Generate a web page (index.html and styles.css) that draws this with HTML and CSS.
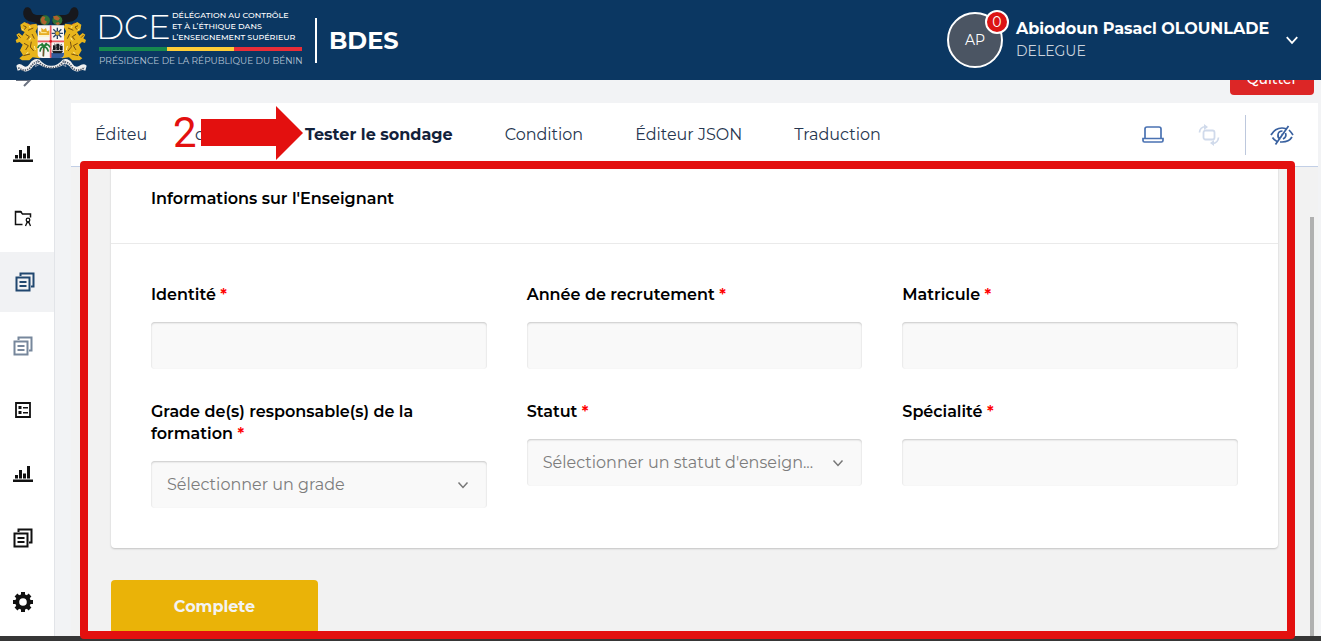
FILE: index.html
```html
<!DOCTYPE html>
<html lang="fr">

<head>
    <meta charset="UTF-8">
    <meta name="viewport" content="width=device-width, initial-scale=1.0">
    <title>BDES</title>
    <link rel="stylesheet" href="styles.css">
</head>

<body>
    <!-- icons used more than once -->
    <svg class="sprite" width="0" height="0">
        <symbol id="i-chart" viewBox="0 0 20 18">
            <path d="M0 14.500h20V17H0zM2 10h3v3.500H2zM6 5h3v8.500H6zM10 8.500h3v5h-3zM14 1h3v12.500h-3z" fill="currentColor" />
        </symbol>
        <symbol id="i-copy" viewBox="0 0 20 20">
            <path d="M5.500 4V1.500h13v13h-2.500M1.500 5.500h13v13h-13zM4.500 10h7M4.500 14h7" fill="none" stroke="currentColor" stroke-width="2" />
        </symbol>
        <symbol id="i-down" viewBox="0 0 12 12">
            <path d="M1.500 3.500L6 8.500l4.500-5" fill="none" stroke="currentColor" stroke-width="1.500" />
        </symbol>
    </svg>

    <header class="header">
        <div class="brand">
            <svg class="crest" viewBox="42 18 222 202">
                <!-- horns -->
                <path d="M76 22c-14 14-4 41 19 42 13 2 19 9 27 11l26-4-2-20c-12-12-29-3-43-9-10-4-6-16-18-21-5-1-8 0-9 1z" fill="#17181d" />
                <path d="M229 22c14 14 4 41-19 42-13 2-19 9-27 11l-26-4 2-20c12-12 29-3 43-9 10-4 6-16 18-21 5-1 8 0 9 1z" fill="#17181d" />
                <ellipse cx="135" cy="60" rx="15" ry="15" fill="#2f7138" />
                <ellipse cx="172" cy="60" rx="15" ry="15" fill="#2f7138" />
                <path d="M122 57l6-9 8 2-3 9 8 5-6 9-10-4zM159 48l12-2 9 8-6 7-11-4zM166 68l10-3 4 6-8 4z" fill="#b0612d" />
                <path d="M81 66l10 8 10-3v7H84zM224 66l-10 8-10-3v7h17z" fill="#c7222c" />
                <!-- leopards -->
                <path d="M61 73l12-8 17 8 19-3 5 9-7 14 7 17v43l9 13-4 8-21-3-10 9H66l-8-6 11-9-9-15 8-17-9-8-9 3-3-9 8-5-6-11 8-5 10 8 7-11-10-5z" fill="#e8b51c" />
                <path d="M244 73l-12-8-17 8-19-3-5 9 7 14-7 17v43l-9 13 4 8 21-3 10 9h22l8-6-11-9 9-15-8-17 9-8 9 3 3-9-8-5 6-11-8-5-10 8-7-11 10-5z" fill="#e8b51c" />
                <path d="M70 76l9 4-6 8M84 90l16-7M77 102l11 7-7 9M96 101l7 14M72 129l13 7-8 13M94 124l-3 16 10 12M70 166l20-5M54 104l8 8M234 76l-9 4 6 8M220 90l-16-7M228 102l-11 7 7 9M209 101l-7 14M233 129l-13 7 8 13M211 124l3 16-10 12M234 166l-20-5M251 104l-8 8" fill="none" stroke="#77500f" stroke-width="3" />
                <path d="M66 85l5 5M87 79l5 2M93 112l-5 8M103 137l3 12M79 160l6-4M239 85l-5 5M217 79l-5 2M212 112l5 8M202 137l-3 12M226 160l-6-4" stroke="#fff0a2" stroke-width="3" />
                <!-- shield -->
                <path d="M113 75h79v86q0 12-13 12h-53q-13 0-13-12z" fill="#f8f5f2" />
                <path d="M152 157h40v4q0 12-13 12h-27z" fill="#315c9c" />
                <path d="M113 123h79M152 75v97" stroke="#ea5961" stroke-width="5" />
                <circle cx="152" cy="123" r="4" fill="#d50f1b" />
                <path d="M117 104V91l7 5V82l7 6 7-5 3 10 7-3v14z" fill="#e7ad27" />
                <path d="M117 107h30M122 97h18" stroke="#fff0a5" stroke-width="3" />
                <path d="M172 82v34M155 99h34M160 87l24 24M184 87l-24 24" stroke="#28466a" stroke-width="4" />
                <circle cx="172" cy="99" r="7" fill="#e3b230" stroke="#28466a" stroke-width="2" />
                <path d="M132 137l-2 31M132 139q-12-12-19 4M132 139q-10 0-12 15M132 139q11-13 18 2M132 139q10 2 13 15M132 138l-7-9M132 138l8-10" fill="none" stroke="#237c37" stroke-width="5" />
                <path d="M130 145v23" stroke="#8a442b" stroke-width="3" />
                <path d="M156 151h34l-6 8h-24zM159 135h8v14h-8zM169 130h9v19h-9zM180 136h8v13h-8z" fill="#191c22" />
                <path d="M162 130l24 20M157 149l29-17" stroke="#191c22" stroke-width="2" />
                <!-- scroll -->
                <path d="M49 196q8-10 22 1 9 7 18-7 13-19 30-12 16 19 35 18 18 1 34-18 17-7 29 12 9 14 20 7 13-10 23-1l-4 15q-10-5-20 2-13 2-24-11-9-13-19-11-19 13-39 13t-38-13q-11-2-20 11-10 13-24 11-9-7-19-2z" fill="#f0f0f0" />
                <path d="M55 202q18 14 34 2 13-21 27-20 19 20 38 18 21 2 36-18 17 0 28 20 16 12 36-2" fill="none" stroke="#4b5565" stroke-width="5" stroke-dasharray="4 3" />
                <path d="M113 179l-7 20 12-7M191 179l7 20-12-7" fill="none" stroke="#8593a8" stroke-width="3" />
            </svg>
            <div class="dce">
                <div class="dce-top">
                    <span class="dce-name">DCE</span>
                    <span class="dce-text">DÉLÉGATION AU CONTRÔLE<br>ET À L’ÉTHIQUE DANS<br>L’ENSEIGNEMENT SUPÉRIEUR</span>
                </div>
                <div class="flag"><i class="green"></i><i class="yellow"></i><i class="red"></i></div>
                <div class="dce-sub">PRÉSIDENCE DE LA RÉPUBLIQUE DU BÉNIN</div>
            </div>
            <div class="brand-name">BDES</div>
        </div>
        <div class="user">
            <div class="avatar">AP<span class="badge">0</span></div>
            <div class="user-info">
                <div class="user-name">Abiodoun Pasacl OLOUNLADE</div>
                <div class="user-role">DELEGUE</div>
            </div>
            <svg class="user-arrow"><use href="#i-down" /></svg>
        </div>
    </header>

    <div class="layout">
        <aside class="sidebar">
            <div class="sidebar-toggle">
                <svg width="16" height="14" viewBox="0 0 16 14"><path d="M0 7h14M8 1l6 6-6 6" fill="none" stroke="#6b7280" stroke-width="2" /></svg>
            </div>
            <a class="side-item" href="#" aria-label="Statistiques"><svg width="20" height="18"><use href="#i-chart" /></svg></a>
            <a class="side-item" href="#" aria-label="Dossiers">
                <svg width="20" height="18" viewBox="0 0 20 18"><path d="M9.500 15.500H2.500v-13h5l2 2.500h8v3.500M3 3h6" fill="none" stroke="currentColor" stroke-width="1.500" /><circle cx="15" cy="11" r="1.800" fill="none" stroke="currentColor" stroke-width="1.300" /><path d="M12.500 17l1.500-3.500h2l1.500 3.500" fill="none" stroke="currentColor" stroke-width="1.300" /></svg>
            </a>
            <a class="side-item active" href="#" aria-label="Sondages"><svg width="20" height="20"><use href="#i-copy" /></svg></a>
            <a class="side-item muted" href="#" aria-label="Modèles"><svg width="20" height="20"><use href="#i-copy" /></svg></a>
            <a class="side-item" href="#" aria-label="Listes">
                <svg width="20" height="18" viewBox="0 0 20 18"><path d="M3 2h14v14H3z" fill="none" stroke="currentColor" stroke-width="1.800" /><path d="M5.500 5h3v3h-3zM5.500 10h3v3h-3zM10 6h5v1.500h-5zM10 11h5v1.500h-5z" fill="currentColor" /></svg>
            </a>
            <a class="side-item" href="#" aria-label="Rapports"><svg width="20" height="18"><use href="#i-chart" /></svg></a>
            <a class="side-item" href="#" aria-label="Documents"><svg width="20" height="20"><use href="#i-copy" /></svg></a>
            <a class="side-item" href="#" aria-label="Paramètres">
                <svg width="20" height="20" viewBox="0 0 20 20"><circle cx="10" cy="10" r="5.800" fill="none" stroke="currentColor" stroke-width="4" /><path d="M10 0v4M10 16v4M0 10h4M16 10h4M3 3l3 3M14 14l3 3M17 3l-3 3M6 14l-3 3" stroke="currentColor" stroke-width="4" /></svg>
            </a>
        </aside>

        <main class="main">
            <div class="actions">
                <button type="button" class="quit">Quitter</button>
            </div>

            <div class="tabs">
                <a class="tab tab-first" href="#">Éditeu</a>
                <a class="tab tab-second" href="#">c</a>
                <a class="tab tab-active" href="#">Tester le sondage</a>
                <a class="tab" href="#">Condition</a>
                <a class="tab" href="#">Éditeur JSON</a>
                <a class="tab" href="#">Traduction</a>
                <div class="tools">
                    <button type="button" class="tool" aria-label="Appareil">
                        <svg width="24" height="24" viewBox="0 0 24 24"><path d="M4 15.500V6q0-2 2-2h12q2 0 2 2v9.500M2 15.500h20v2q0 1.500-1.500 1.500h-17Q2 19 2 17.500z" fill="none" stroke="#4a72b2" stroke-width="1.700" /></svg>
                    </button>
                    <button type="button" class="tool" aria-label="Orientation" disabled>
                        <svg width="24" height="24" viewBox="0 0 24 24"><rect x="6.500" y="7.500" width="11" height="9" rx="2" fill="none" stroke="#d0daeb" stroke-width="1.800" /><path d="M2.500 9.500q.5-5.500 6-6M21.500 14.500q-.5 5.500-6 6" fill="none" stroke="#d0daeb" stroke-width="1.700" /><path d="M7 1l4 3-4 3zM17 17l-4 3 4 3z" fill="#d0daeb" /></svg>
                    </button>
                    <span class="tools-line"></span>
                    <button type="button" class="tool" aria-label="Masquer">
                        <svg width="24" height="24" viewBox="0 0 24 24"><path d="M1 12q4-7 11-7 2 0 4 .8M19 7q2 2 4 5M2.500 14.500Q4 17 7 18.500M10 19h2q7 0 10-5M18.500 3l-13 18.500M10.500 16q-3-1-2.500-4.500.5-3.500 4.500-3.500M15.500 10q1.500 4-2.500 6M12.500 11l-1.500 3" fill="none" stroke="#38609f" stroke-width="1.700" /></svg>
                    </button>
                </div>
                <div class="step">
                    <span class="step-number">2</span>
                    <svg width="102" height="54" viewBox="0 0 102 54"><path d="M0 13h75V0l27 27-27 27V40H0z" fill="#e3100f" /></svg>
                </div>
            </div>

            <div class="survey">
                <form>
                    <div class="card">
                        <h2 class="card-title">Informations sur l'Enseignant</h2>
                        <div class="fields">
                            <div class="field">
                                <label for="identite">Identité <span class="required">*</span></label>
                                <input type="text" id="identite" class="control">
                            </div>
                            <div class="field">
                                <label for="annee">Année de recrutement <span class="required">*</span></label>
                                <input type="text" id="annee" class="control">
                            </div>
                            <div class="field">
                                <label for="matricule">Matricule <span class="required">*</span></label>
                                <input type="text" id="matricule" class="control">
                            </div>
                            <div class="field">
                                <label for="grade">Grade de(s) responsable(s) de la formation <span class="required">*</span></label>
                                <div class="select">
                                    <select id="grade" class="control"><option>Sélectionner un grade</option></select>
                                    <svg class="select-arrow"><use href="#i-down" /></svg>
                                </div>
                            </div>
                            <div class="field">
                                <label for="statut">Statut <span class="required">*</span></label>
                                <div class="select">
                                    <select id="statut" class="control"><option>Sélectionner un statut d'enseign...</option></select>
                                    <svg class="select-arrow"><use href="#i-down" /></svg>
                                </div>
                            </div>
                            <div class="field">
                                <label for="specialite">Spécialité <span class="required">*</span></label>
                                <input type="text" id="specialite" class="control">
                            </div>
                        </div>
                    </div>
                    <button type="button" class="complete">Complete</button>
                </form>
                <div class="scroll"></div>
            </div>
        </main>
    </div>
    <div class="bottom"></div>
    <div class="frame"></div>
</body>

</html>
```
FILE: styles.css
```css
* {
    box-sizing: border-box;
    margin: 0;
    padding: 0;
}

body {
    display: flex;
    flex-direction: column;
    position: relative;
    height: 100vh;
    overflow: hidden;
    background: #f2f3f5;
    font-family: Montserrat, Inter, sans-serif;
    font-size: 16px;
    line-height: 22px;
}

button,
input,
select {
    font: inherit;
    border: 0;
}

a {
    color: inherit;
    text-decoration: none;
}

svg {
    display: block;
    flex-shrink: 0;
}

.sprite {
    position: absolute;
}

/* header */
.header {
    display: flex;
    justify-content: space-between;
    align-items: center;
    flex-shrink: 0;
    height: 80px;
    padding: 0 22px 0 14px;
    background: #0b3762;
    color: #fff;
}

.brand,
.user {
    display: flex;
    align-items: center;
}

.crest {
    width: 74px;
    height: 68px;
    margin-right: 11px;
}

.dce {
    width: 203px;
    white-space: nowrap;
}

.dce-top {
    display: flex;
    justify-content: space-between;
    align-items: center;
    height: 36px;
    padding-bottom: 5px;
}

.dce-name {
    margin-left: -3px;
    font-size: 34px;
    font-weight: 300;
    line-height: 34px;
}

.dce-text {
    width: 130px;
    font-size: 8px;
    font-weight: 500;
    line-height: 11px;
}

.flag {
    display: flex;
    height: 4px;
    margin-bottom: 4px;
}

.flag i {
    flex: 1;
}

.green {
    background: #16884f;
}

.yellow {
    background: #fdcd38;
}

.red {
    background: #e92d38;
}

.dce-sub {
    padding-bottom: 2px;
    color: #b8c6d6;
    font-size: 9px;
    line-height: 12px;
}

.brand-name {
    margin-left: 13px;
    padding-left: 12px;
    border-left: 2px solid #fff;
    font-size: 24px;
    font-weight: 700;
    line-height: 45px;
}

.avatar {
    position: relative;
    width: 56px;
    height: 56px;
    margin-right: 13px;
    border: 2px solid #fff;
    border-radius: 50%;
    background: #4b5563;
    font-size: 14px;
    line-height: 52px;
    text-align: center;
}

.badge {
    position: absolute;
    top: -4px;
    right: -8px;
    width: 24px;
    height: 24px;
    border: 2px solid #fff;
    border-radius: 50%;
    background: #dc1414;
    font-size: 14px;
    line-height: 20px;
}

.user-info {
    min-width: 260px;
}

.user-name {
    font-size: 16px;
    font-weight: 700;
}

.user-role {
    color: #cbd3dd;
    font-size: 14px;
}

.user-arrow {
    width: 14px;
    height: 14px;
    margin-left: 9px;
}

/* sidebar */
.layout {
    display: flex;
    flex: 1;
    min-height: 0;
}

.sidebar {
    display: flex;
    flex-direction: column;
    flex-shrink: 0;
    gap: 4px;
    width: 55px;
    background: #fff;
    border-right: 1px solid #e2e4e8;
    overflow: hidden;
}

.sidebar-toggle {
    display: flex;
    align-items: flex-end;
    flex-shrink: 0;
    height: 7px;
    margin-bottom: 33px;
    padding-left: 16px;
    overflow: hidden;
}

.side-item {
    display: flex;
    align-items: center;
    flex-shrink: 0;
    height: 60px;
    padding-left: 13px;
    color: #111;
}

.side-item.active {
    padding-left: 15px;
    background: #f1f2f4;
    color: #20476f;
}

.side-item.muted {
    color: #77879c;
}

/* content */
.main {
    display: flex;
    flex-direction: column;
    flex: 1;
    min-width: 0;
    padding: 0 3px 0 16px;
}

.actions {
    display: flex;
    justify-content: flex-end;
    align-items: flex-end;
    height: 15px;
    margin-bottom: 8px;
    padding-right: 4px;
    overflow: hidden;
}

.quit {
    flex-shrink: 0;
    width: 84px;
    height: 32px;
    border-radius: 4px;
    background: #dc2626;
    color: #fff;
    font-size: 14px;
    font-weight: 500;
}

.tabs {
    display: flex;
    align-items: center;
    flex-shrink: 0;
    gap: 52px;
    position: relative;
    height: 64px;
    padding: 0 24px;
    background: #fff;
    border-bottom: 1px solid #c2cfe6;
    color: #26364f;
    white-space: nowrap;
}

.tab-first {
    width: 48px;
}

.tab-second {
    width: 58px;
}

.tab-active {
    color: #12213a;
    font-weight: 700;
}

.tools {
    display: flex;
    align-items: center;
    gap: 24px;
    margin-left: auto;
}

.tool {
    display: flex;
    background: none;
}

.tool:first-child {
    margin-right: 8px;
}

.tools-line {
    width: 1px;
    height: 40px;
    background: #bdc8dd;
}

/* step marker over the tabs */
.step {
    display: flex;
    align-items: center;
    position: absolute;
    top: 3px;
    left: 102px;
    gap: 4px;
    color: #e3100f;
}

.step-number {
    width: 24px;
    font-family: Roboto, sans-serif;
    font-size: 42px;
    line-height: 48px;
}

.survey {
    display: flex;
    flex: 1;
    min-height: 0;
    padding: 0 4px 0 40px;
    background: #f2f2f2;
    overflow: hidden;
}

.survey form {
    flex: 1;
    margin-right: 32px;
}

.card {
    margin-bottom: 32px;
    background: #fff;
    border-radius: 0 0 4px 4px;
    box-shadow: 0 1px 2px rgba(0, 0, 0, 0.2);
}

.card-title {
    padding: 21px 40px 33px;
    border-bottom: 1px solid #eaeaea;
    font-size: 16px;
    font-weight: 600;
}

.fields {
    display: grid;
    grid-template-columns: repeat(3, 1fr);
    gap: 32px 40px;
    padding: 40px;
}

.field label {
    display: block;
    margin-bottom: 16px;
    font-weight: 600;
}

.required {
    color: #f00;
}

.control {
    display: block;
    width: 100%;
    height: 47px;
    padding: 0 48px 0 16px;
    border-radius: 4px;
    background: #f9f9f9;
    box-shadow: inset 0 1px 2px rgba(0, 0, 0, 0.2);
    color: #7d7d7d;
    appearance: none;
}

.select {
    position: relative;
}

.select-arrow {
    position: absolute;
    top: 18px;
    right: 18px;
    width: 12px;
    height: 12px;
    color: #777;
    pointer-events: none;
}

.complete {
    width: 207px;
    height: 54px;
    border-radius: 4px;
    background: #eab308;
    color: #f3f3f3;
    font-weight: 700;
}

.scroll {
    width: 4px;
    margin-top: 50px;
    background: #b0b0b0;
}

.bottom {
    flex-shrink: 0;
    height: 5px;
    background: #363636;
}

/* red box around the survey */
.frame {
    position: absolute;
    top: 161px;
    right: 26px;
    bottom: 2px;
    left: 80px;
    border: 8px solid #e3100f;
    border-radius: 4px;
    pointer-events: none;
}
```
